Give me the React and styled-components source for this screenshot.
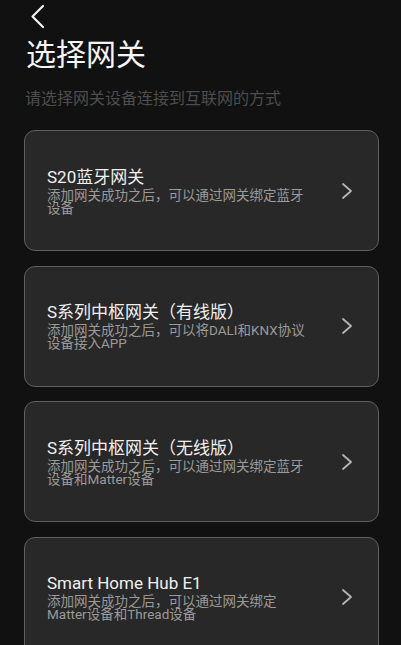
import React from 'react';
import styled, { createGlobalStyle } from 'styled-components';

const gateways = [
	{ name: 'S20蓝牙网关', desc: '添加网关成功之后，可以通过网关绑定蓝牙设备' },
	{ name: 'S系列中枢网关（有线版）', desc: '添加网关成功之后，可以将DALI和KNX协议设备接入APP' },
	{ name: 'S系列中枢网关（无线版）', desc: '添加网关成功之后，可以通过网关绑定蓝牙设备和Matter设备' },
	{ name: 'Smart Home Hub E1', desc: '添加网关成功之后，可以通过网关绑定Matter设备和Thread设备' },
];

const App = () => {
	return (
		<>
			<GlobalStyle />
			<Page>
				<BackButton aria-label="back">
					<svg width="15" height="25" viewBox="0 0 15 25" fill="none">
						<path d="M13 2 L2.5 12.5 L13 23" stroke="#f2f2f2" strokeWidth="2.2" strokeLinecap="round" strokeLinejoin="round" />
					</svg>
				</BackButton>
				<Title>选择网关</Title>
				<Subtitle>请选择网关设备连接到互联网的方式</Subtitle>
				<List>
					{gateways.map((g) => (
						<Card key={g.name}>
							<CardText>
								<CardTitle>{g.name}</CardTitle>
								<CardDesc>{g.desc}</CardDesc>
							</CardText>
							<Chevron width="12" height="18" viewBox="0 0 12 18" fill="none">
								<path d="M2 2 L10 9 L2 16" stroke="#b5b5b5" strokeWidth="1.8" strokeLinecap="round" strokeLinejoin="round" />
							</Chevron>
						</Card>
					))}
				</List>
			</Page>
		</>
	);
};

// styled
const GlobalStyle = createGlobalStyle`
	html, body {
		margin: 0;
		padding: 0;
		background: #111111;
		overflow: hidden;
	}
	* {
		box-sizing: border-box;
	}
`;

const Page = styled.div`
	min-height: 100vh;
	background: #111111;
	padding: 0 22px 0 24px;
	font-family: Roboto, 'Noto Sans CJK SC', sans-serif;
	display: flex;
	flex-direction: column;
`;

const BackButton = styled.button`
	width: 32px;
	height: 32px;
	padding: 4px 0 0 6px;
	margin: 0;
	border: none;
	background: transparent;
	display: flex;
	align-items: flex-start;
	justify-content: flex-start;
`;

const Title = styled.h1`
	margin: 5px 0 0 2px;
	font-size: 30px;
	line-height: 36px;
	font-weight: 400;
	color: #f5f5f5;
`;

const Subtitle = styled.p`
	margin: 16px 0 0 1px;
	font-size: 16px;
	line-height: 20px;
	color: #4d4d4d;
`;

const List = styled.div`
	margin-top: 21px;
	display: flex;
	flex-direction: column;
	gap: 14.5px;
`;

const Card = styled.div`
	height: 121px;
	flex-shrink: 0;
	border: 1px solid #5f5f5f;
	border-radius: 11px;
	background: #282828;
	display: flex;
	align-items: center;
	padding: 0 25px 0 22px;
`;

const CardText = styled.div`
	flex: 1;
	max-width: 264px;
	display: flex;
	flex-direction: column;
	gap: 2px;
`;

const CardTitle = styled.div`
	font-size: 17px;
	line-height: 20px;
	color: #f0f0f0;
`;

const CardDesc = styled.div`
	font-size: 13.5px;
	line-height: 13px;
	color: #9a9a9a;
`;

const Chevron = styled.svg`
	margin-left: auto;
	flex-shrink: 0;
`;

export default App;
